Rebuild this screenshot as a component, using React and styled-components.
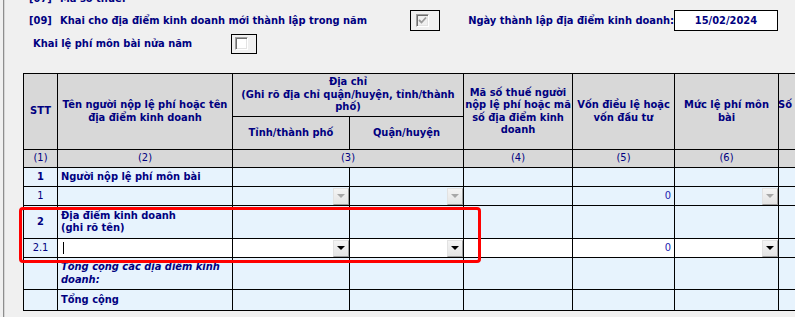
import React from "react";
import styled, { createGlobalStyle } from "styled-components";

const GlobalStyle = createGlobalStyle`
  html, body {
    margin: 0;
    padding: 0;
    background: #f0f0f0;
    overflow: hidden;
  }
  body {
    font-family: "DejaVu Sans Condensed", "Liberation Sans", sans-serif;
    font-size: 11px;
    color: #000080;
  }
`;

const Panel = styled.div`
  margin-left: 3px;
  height: 317px;
  border-left: 1px solid #8e8e8e;
  box-shadow: inset 1px 0 0 #d6d6d6;
  padding-left: 19px;
  overflow: hidden;
`;

const Fields = styled.div`
  margin-top: -12px;
  margin-bottom: 18px;
`;

const FieldRow = styled.div`
  display: grid;
  grid-template-columns: ${(p) => p.$cols};
  align-items: center;
  height: ${(p) => p.$h}px;
  font-weight: bold;
`;

const Label = styled.div`
  padding-left: ${(p) => p.$indent || 0}px;
  text-align: ${(p) => p.$right ? "right" : "left"};
  white-space: nowrap;
`;

const Code = styled.span`
  display: inline-block;
  width: 31px;
`;

const CheckFrame = styled.div`
  width: ${(p) => p.$w}px;
  height: ${(p) => p.$h}px;
  box-sizing: border-box;
  border: 1px solid #000;
  display: flex;
  align-items: center;
  padding-left: ${(p) => p.$inset}px;
`;

const CheckBox = styled.div`
  width: 13px;
  height: 13px;
  box-sizing: border-box;
  border: 1px solid;
  border-color: #a0a0a0 #ffffff #ffffff #a0a0a0;
  box-shadow: inset 1px 1px 0 #6e6e6e, inset -1px -1px 0 #e3e3e3;
  background: ${(p) => p.$disabled ? "#f0f0f0" : "#ffffff"};
  display: flex;
  align-items: center;
  justify-content: center;
`;

const DateBox = styled.div`
  height: 21px;
  box-sizing: border-box;
  border: 1px solid #000;
  background: #fff;
  display: flex;
  align-items: center;
  justify-content: center;
  font-weight: bold;
`;

const TableWrap = styled.div`
  position: relative;
  width: max-content;
`;

const Grid = styled.div`
  display: grid;
  grid-template-columns: 33px 174px 116px 113px 108px 101px 103px 120px;
  grid-template-rows: 42px 32px 17px 18px 18px 32px 18px 31px 20px;
  gap: 1px;
  padding: 1px;
  background: #000;
`;

const bgs = { head: "#d8d8d8", blue: "#e7f3fd", white: "#ffffff" };

const Cell = styled.div`
  background: ${(p) => bgs[p.$bg || "blue"]};
  grid-column: ${(p) => p.$col || "auto"};
  grid-row: ${(p) => p.$row || "auto"};
  display: flex;
  align-items: center;
  justify-content: ${(p) => p.$justify || "flex-start"};
  text-align: ${(p) => p.$justify === "center" ? "center" : "left"};
  padding: 0 ${(p) => p.$pad ?? 3}px;
  font-weight: ${(p) => p.$bold ? "bold" : "normal"};
  font-style: ${(p) => p.$italic ? "italic" : "normal"};
  line-height: 12.5px;
  overflow: hidden;
  white-space: nowrap;
`;

const Head = styled(Cell).attrs({ $bg: "head", $justify: "center", $bold: true })``;

const ColNo = styled(Cell).attrs({ $bg: "head", $justify: "center", $row: "3" })``;

const DropBtn = styled.div`
  width: 16px;
  height: 17px;
  box-sizing: border-box;
  border: 1px solid;
  border-color: #e2e2e2 #a0a0a0 #a0a0a0 #e2e2e2;
  background: linear-gradient(#f4f4f4, #e4e4e4);
  display: flex;
  align-items: center;
  justify-content: center;
  margin-left: auto;
`;

const Caret = styled.div`
  width: 0;
  height: 0;
  border-left: 4px solid transparent;
  border-right: 4px solid transparent;
  border-top: 4px solid ${(p) => p.$disabled ? "#a8a8a8" : "#000"};
`;

const Cursor = styled.div`
  width: 1px;
  height: 12px;
  background: #000;
  margin-left: 2px;
`;

const Amount = styled.span`
  margin-left: auto;
  margin-right: 3px;
  color: #1c1cb0;
`;

const Highlight = styled.div`
  position: absolute;
  left: -4px;
  top: 134px;
  width: 462px;
  height: 56px;
  box-sizing: border-box;
  border: 3px solid #ff0000;
  border-radius: 4px;
  pointer-events: none;
`;

const Drop = ({ disabled }) => (
  <DropBtn>
    <Caret $disabled={disabled} />
  </DropBtn>
);

const Check = ({ checked, disabled }) => (
  <CheckBox $disabled={disabled}>
    {checked && (
      <svg width="9" height="9" viewBox="0 0 9 9">
        <path d="M1 4 L3.5 6.5 L8 1.5" fill="none" stroke="#9a9a9a" strokeWidth="1.8" />
      </svg>
    )}
  </CheckBox>
);

export default function App() {
  return (
    <>
      <GlobalStyle />
      <Panel>
        <Fields>
          <FieldRow $cols="387px" $h={21}>
            <Label $indent={6}><Code>[07]</Code>Mã số thuế:</Label>
          </FieldRow>
          <FieldRow $cols="387px 30px 234px 104px" $h={23}>
            <Label $indent={6}><Code>[09]</Code>Khai cho địa điểm kinh doanh mới thành lập trong năm</Label>
            <CheckFrame $w={30} $h={21} $inset={5}>
              <Check checked disabled />
            </CheckFrame>
            <Label $right>Ngày thành lập địa điểm kinh doanh:</Label>
            <DateBox>15/02/2024</DateBox>
          </FieldRow>
          <FieldRow $cols="208px 26px" $h={23}>
            <Label $indent={10}>Khai lệ phí môn bài nửa năm</Label>
            <CheckFrame $w={26} $h={20} $inset={3}>
              <Check />
            </CheckFrame>
          </FieldRow>
        </Fields>

        <TableWrap>
          <Grid>
            <Head $col="1" $row="1 / 3">STT</Head>
            <Head $col="2" $row="1 / 3">Tên người nộp lệ phí hoặc tên<br />địa điểm kinh doanh</Head>
            <Head $col="3 / 5" $row="1">Địa chỉ<br />(Ghi rõ địa chỉ quận/huyện, tỉnh/thành<br />phố)</Head>
            <Head $col="3" $row="2">Tỉnh/thành phố</Head>
            <Head $col="4" $row="2">Quận/huyện</Head>
            <Head $col="5" $row="1 / 3" $pad={0}>Mã số thuế người<br />nộp lệ phí hoặc mã<br />số địa điểm kinh<br />doanh</Head>
            <Head $col="6" $row="1 / 3">Vốn điều lệ hoặc<br />vốn đầu tư</Head>
            <Head $col="7" $row="1 / 3">Mức lệ phí môn<br />bài</Head>
            <Head $col="8" $row="1 / 3" $pad={0}>Số tiền lệ phí môn bài<br />phải nộp</Head>

            <ColNo $col="1">(1)</ColNo>
            <ColNo $col="2">(2)</ColNo>
            <ColNo $col="3 / 5">(3)</ColNo>
            <ColNo $col="5">(4)</ColNo>
            <ColNo $col="6">(5)</ColNo>
            <ColNo $col="7">(6)</ColNo>
            <ColNo $col="8">(7)</ColNo>

            <Cell $justify="center" $bold>1</Cell>
            <Cell $bold>Người nộp lệ phí môn bài</Cell>
            <Cell />
            <Cell />
            <Cell />
            <Cell />
            <Cell />
            <Cell />

            <Cell $justify="center">1</Cell>
            <Cell />
            <Cell $pad={0}><Drop disabled /></Cell>
            <Cell $pad={0}><Drop disabled /></Cell>
            <Cell />
            <Cell $pad={0}><Amount>0</Amount></Cell>
            <Cell $pad={0}><Drop disabled /></Cell>
            <Cell />

            <Cell $justify="center" $bold>2</Cell>
            <Cell $bold>Địa điểm kinh doanh<br />(ghi rõ tên)</Cell>
            <Cell />
            <Cell />
            <Cell />
            <Cell />
            <Cell />
            <Cell />

            <Cell $justify="center">2.1</Cell>
            <Cell $bg="white"><Cursor /></Cell>
            <Cell $bg="white" $pad={0}><Drop /></Cell>
            <Cell $bg="white" $pad={0}><Drop /></Cell>
            <Cell $bg="white" />
            <Cell $bg="white" $pad={0}><Amount>0</Amount></Cell>
            <Cell $bg="white" $pad={0}><Drop /></Cell>
            <Cell />

            <Cell />
            <Cell $bold $italic>Tổng cộng các địa điểm kinh<br />doanh:</Cell>
            <Cell />
            <Cell />
            <Cell />
            <Cell />
            <Cell />
            <Cell />

            <Cell />
            <Cell $bold>Tổng cộng</Cell>
            <Cell />
            <Cell />
            <Cell />
            <Cell />
            <Cell />
            <Cell />
          </Grid>
          <Highlight />
        </TableWrap>
      </Panel>
    </>
  );
}
